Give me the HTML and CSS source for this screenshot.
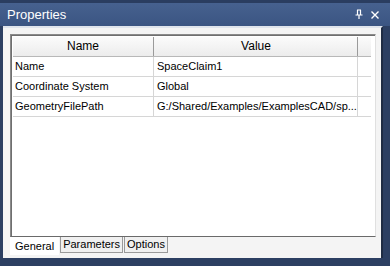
FILE: index.html
```html
<!DOCTYPE html>
<html lang="en">
<head>
    <meta charset="UTF-8">
    <title>Properties</title>
    <link rel="stylesheet" href="styles.css">
</head>
<body>
    <div class="window">
        <!-- title bar -->
        <div class="titlebar">
            <span class="title">Properties</span>
            <span class="buttons">
                <svg width="10" height="11" viewBox="0 0 10 11"><path d="M3 1h4M3.5 1v5M6.5 1v5M1.5 6h7M5 6v4" stroke="#fff" stroke-width="1.2" fill="none"/></svg>
                <svg width="10" height="10" viewBox="0 0 10 10"><path d="M1.5 1.5l7 7M8.5 1.5l-7 7" stroke="#fff" stroke-width="1.4"/></svg>
            </span>
        </div>
        <div class="panel">
            <div class="grid">
                <div class="row head">
                    <div class="cell c1">Name</div>
                    <div class="cell c2">Value</div>
                    <div class="cell c3"></div>
                </div>
                <div class="row">
                    <div class="cell c1">Name</div>
                    <div class="cell c2">SpaceClaim1</div>
                </div>
                <div class="row">
                    <div class="cell c1">Coordinate System</div>
                    <div class="cell c2">Global</div>
                </div>
                <div class="row">
                    <div class="cell c1">GeometryFilePath</div>
                    <div class="cell c2">G:/Shared/Examples/ExamplesCAD/sp...</div>
                </div>
            </div>
            <div class="tabs">
                <a class="tab active" href="javascript:;">General</a>
                <a class="tab" href="javascript:;">Parameters</a>
                <a class="tab" href="javascript:;">Options</a>
            </div>
        </div>
    </div>
</body>
</html>
```

FILE: styles.css
```css
*{
    margin: 0;
    padding: 0;
    box-sizing: border-box;
}
body{
    background: #2c3f62;
    font-family: "Liberation Sans", Arial, sans-serif;
    font-size: 11px;
    color: #000;
}
.window{
    width: 390px;
    height: 266px;
    display: flex;
    flex-direction: column;
    border-top: 3px solid #2a3d60;
}
.titlebar{
    height: 23px;
    display: flex;
    align-items: center;
    justify-content: space-between;
    padding: 0 10px 0 7px;
    background: linear-gradient(#46618f, #3b5582);
    color: #fff;
}
.title{
    font-size: 13px;
}
.buttons{
    display: flex;
    gap: 6px;
    align-items: center;
}
.panel{
    flex: 1;
    margin: 0 7px 8px 3px;
    background: #f4f4f4;
    border-top: 2px solid #dfe4ec;
    border-right: 2px solid #1f2c44;
    padding: 6px 5px 3px 7px;
    display: flex;
    flex-direction: column;
}
/* sunken grid box */
.grid{
    flex: 1;
    background: #fff;
    border: 1px solid #8a8a8a;
    border-right-color: #e0e0e0;
    border-bottom-color: #6a6a6a;
    box-shadow: inset 1px 1px 0 #6f6f6f;
    padding: 2px 4px 0 2px;
}
.row{
    display: flex;
    height: 20px;
    border-bottom: 1px solid #d6d6d6;
}
.cell{
    padding: 0 2px;
    line-height: 19px;
    white-space: nowrap;
    overflow: hidden;
}
.c1{
    width: 141px;
    border-right: 1px solid #d6d6d6;
}
.c2{
    width: 204px;
    padding-left: 3px;
    border-right: 1px solid #d6d6d6;
}
.c3{
    flex: 1;
}
.head{
    background: linear-gradient(#fbfbfb, #ececec);
    border-bottom: 1px solid #b8b8b8;
}
.head .cell{
    text-align: center;
    font-size: 12px;
    border-right-color: #9a9a9a;
}
.tabs{
    display: flex;
    height: 18px;
    align-items: flex-start;
}
.tab{
    color: #000;
    text-decoration: none;
    padding: 0 2px;
    height: 16px;
    line-height: 15px;
    font-size: 11px;
    background: #f0f0f0;
    border: 1px solid #9a9a9a;
    border-top: none;
    margin-left: 1px;
}
.tab.active{
    background: #fff;
    height: 18px;
    line-height: 19px;
    padding: 0 4px;
    border-color: transparent;
    margin-left: 0;
}
```
